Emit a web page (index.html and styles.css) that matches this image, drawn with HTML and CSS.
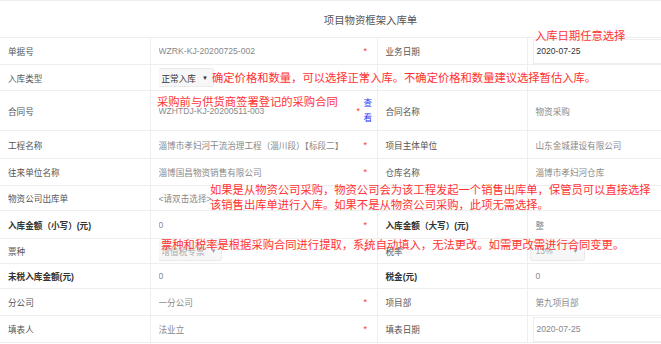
FILE: index.html
```html
<!DOCTYPE html>
<html lang="zh-CN">
<head>
    <meta charset="UTF-8">
    <meta name="viewport" content="width=device-width, initial-scale=1.0">
    <title>项目物资框架入库单</title>
    <link rel="stylesheet" href="styles.css">
</head>
<body>
    <div class="page">
        <table class="form-table">
            <colgroup>
                <col class="c-label">
                <col class="c-value">
                <col class="c-label2">
                <col class="c-value2">
            </colgroup>
            <tr class="r-title">
                <td colspan="4" class="title">项目物资框架入库单</td>
            </tr>
            <tr class="r27">
                <td class="label">单据号</td>
                <td><div class="val"><span class="txt">WZRK-KJ-20200725-002</span><span class="star">*</span></div></td>
                <td class="label">业务日期</td>
                <td class="date-cell"><div class="date-box dark">2020-07-25</div></td>
            </tr>
            <tr class="r26">
                <td class="label">入库类型</td>
                <td><div class="val"><span class="txt"><span class="select dark">正常入库<i class="arrow">▼</i></span></span><span class="star">*</span></div></td>
                <td class="label"></td>
                <td></td>
            </tr>
            <tr class="r40">
                <td class="label">合同号</td>
                <td><div class="val"><span class="txt">WZHTDJ-KJ-20200511-003</span><span class="star">*</span><a class="link">查看</a></div></td>
                <td class="label">合同名称</td>
                <td class="value">物资采购</td>
            </tr>
            <tr class="r28">
                <td class="label">工程名称</td>
                <td><div class="val"><span class="txt">淄博市孝妇河干流治理工程（淄川段）【标段二】</span><span class="star">*</span></div></td>
                <td class="label">项目主体单位</td>
                <td class="value">山东金城建设有限公司</td>
            </tr>
            <tr class="r27">
                <td class="label">往来单位名称</td>
                <td><div class="val"><span class="txt">淄博国昌物资销售有限公司</span><span class="star">*</span></div></td>
                <td class="label">仓库名称</td>
                <td class="value">淄博市孝妇河仓库</td>
            </tr>
            <tr class="r25">
                <td class="label">物资公司出库单</td>
                <td><div class="val"><span class="txt">&lt;请双击选择&gt;</span></div></td>
                <td class="label"></td>
                <td></td>
            </tr>
            <tr class="r28">
                <td class="label bold">入库金额（小写）(元)</td>
                <td><div class="val"><span class="txt">0</span><span class="star">*</span></div></td>
                <td class="label bold">入库金额（大写）(元)</td>
                <td class="value">整</td>
            </tr>
            <tr class="r25">
                <td class="label">票种</td>
                <td><div class="val"><span class="txt"><span class="select faded wide">增值税专票<i class="arrow">▼</i></span></span><span class="star">*</span></div></td>
                <td class="label">税率</td>
                <td class="date-cell"><span class="select faded">13%<i class="arrow">▼</i></span></td>
            </tr>
            <tr class="r25">
                <td class="label bold">未税入库金额(元)</td>
                <td><div class="val"><span class="txt">0</span></div></td>
                <td class="label bold">税金(元)</td>
                <td class="value">0</td>
            </tr>
            <tr class="r27">
                <td class="label">分公司</td>
                <td><div class="val"><span class="txt">一分公司</span><span class="star">*</span></div></td>
                <td class="label">项目部</td>
                <td class="value">第九项目部</td>
            </tr>
            <tr class="r27">
                <td class="label">填表人</td>
                <td><div class="val"><span class="txt">法业立</span><span class="star">*</span></div></td>
                <td class="label">填表日期</td>
                <td class="date-cell"><div class="date-box">2020-07-25</div></td>
            </tr>
        </table>

        <!-- 说明文字 -->
        <div class="note n1">入库日期任意选择</div>
        <div class="note n2">确定价格和数量，可以选择正常入库。不确定价格和数量建议选择暂估入库。</div>
        <div class="note n3">采购前与供货商签署登记的采购合同</div>
        <div class="note n4">如果是从物资公司采购，物资公司会为该工程发起一个销售出库单，保管员可以直接选择<br>该销售出库单进行入库。如果不是从物资公司采购，此项无需选择。</div>
        <div class="note n5">票种和税率是根据采购合同进行提取，系统自动填入，无法更改。如需更改需进行合同变更。</div>
    </div>
</body>
</html>
```

FILE: styles.css
```css
body {
    margin: 0;
    background: #fff;
    font-family: "Liberation Sans", "Noto Sans CJK SC", sans-serif;
}
.page {
    position: relative;
    width: 661px;
    height: 344px;
    overflow: hidden;
}
.form-table {
    width: 661px;
    border-collapse: collapse;
    table-layout: fixed;
    font-size: 8.6px;
    color: #888;
}
.c-label { width: 150px; }
.c-value { width: 227px; }
.c-label2 { width: 150px; }
.c-value2 { width: 134px; }
.form-table td {
    border: 1px solid #eee;
    padding: 0 8px;
    vertical-align: middle;
    white-space: nowrap;
    overflow: hidden;
}
.form-table tr td:first-child {
    border-left: none;
}
.form-table tr td:last-child {
    border-right: none;
}
.r-title td { height: 36px; }
.r25 td { height: 24px; }
.r26 td { height: 25px; }
.r27 td { height: 26px; }
.r28 td { height: 27px; }
.r40 td { height: 39px; }
.title {
    text-align: center;
    padding-left: 88px !important;
    font-size: 10.4px;
    color: #555;
}
.label {
    color: #555;
}
.bold {
    font-weight: bold;
    color: #333;
}
.val {
    display: flex;
    align-items: center;
}
.txt {
    flex: 1;
    overflow: hidden;
}
.star {
    color: #f33;
    font-size: 9px;
    width: 6px;
    margin-right: -1px;
}
.link {
    color: #33f;
    font-size: 8.6px;
    width: 9px;
    white-space: normal;
    line-height: 15px;
    margin-left: 2px;
    margin-right: -4px;
}
.dark {
    color: #333;
}
.select {
    display: inline-flex;
    align-items: center;
    height: 17px;
    padding: 0 5px;
    margin-left: -3px;
    background: #f7f7f7;
    border: 1px solid #ebebeb;
    border-radius: 2px;
    min-width: 43px;
}
.select.wide {
    min-width: 52px;
}
.select.faded {
    color: #aaa;
}
.arrow {
    font-style: normal;
    font-size: 6px;
    margin-left: auto;
    padding-left: 6px;
    color: #333;
}
.faded .arrow {
    color: #999;
}
.date-cell {
    padding-left: 5px !important;
    padding-right: 0 !important;
}
.date-box {
    border: 1px solid #eee;
    border-right: none;
    height: 23px;
    line-height: 23px;
    padding-left: 3px;
}
.note {
    position: absolute;
    color: #f33;
    font-size: 11.3px;
    line-height: 13px;
    white-space: nowrap;
    font-family: "Noto Sans CJK SC", sans-serif;
}
.n1 { left: 535px; top: 29px; }
.n2 { left: 212px; top: 71px; }
.n3 { left: 157px; top: 95px; }
.n4 { left: 210px; top: 182px; line-height: 15px; }
.n5 { left: 161px; top: 238px; }
```
